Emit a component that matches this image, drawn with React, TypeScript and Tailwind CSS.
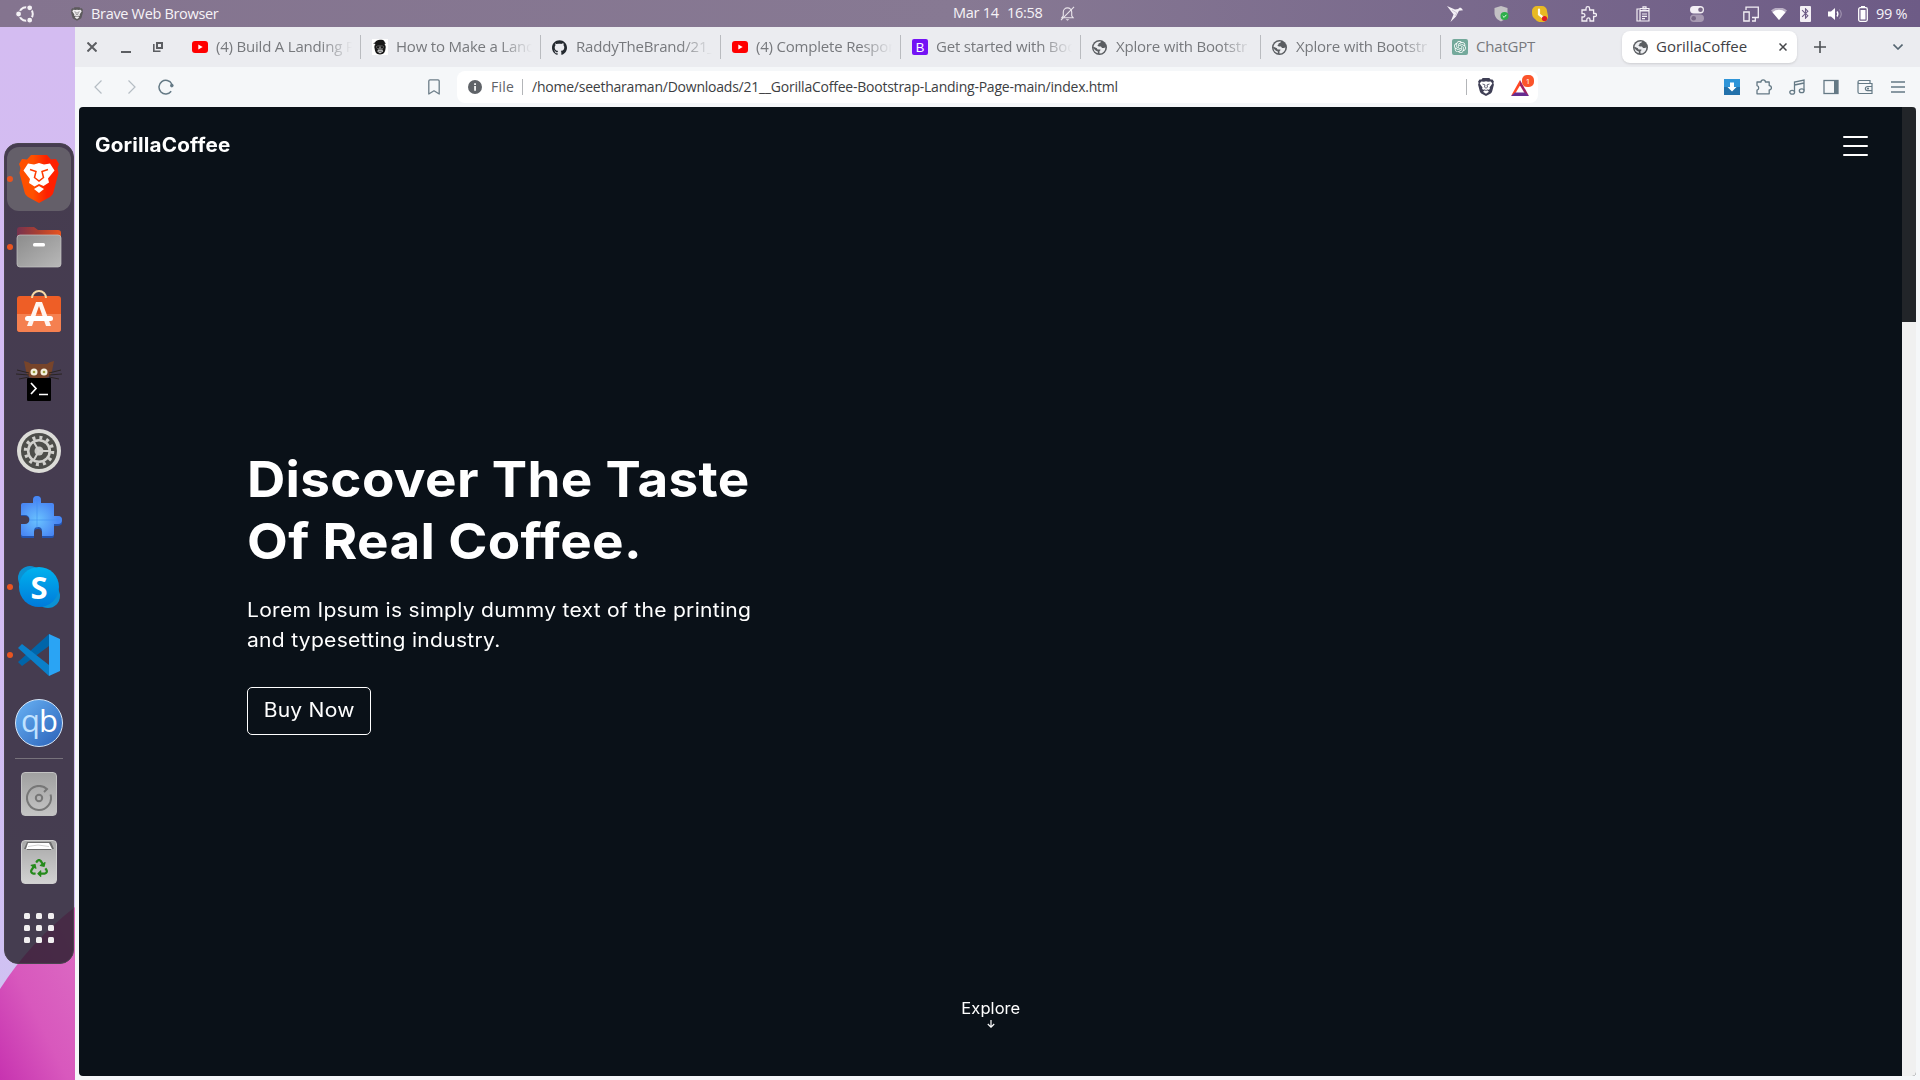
import React from "react";
import { SiGithub, SiOpenai } from "react-icons/si";
import { MdBluetooth } from "react-icons/md";
import { FaRecycle } from "react-icons/fa";

type Kids = { children?: React.ReactNode };

function BraveShield({ className, fill, face }: { className: string; fill: string; face: string }) {
  return (
    <svg viewBox="0 0 16 18" className={className}>
      <path d="M4.7 0h6.6l1.3 1.5 1.9-.1 1.4 2.2-.5 1.3.5 1.9-1.7 6.4c-.2.9-.8 1.7-1.5 2.2L8 18l-4.7-2.6c-.7-.5-1.3-1.3-1.5-2.2L.1 6.8l.5-1.9-.5-1.3 1.4-2.2 1.9.1z" fill={fill} />
      <path d="M3.2 3.4 6 3.8 8 3.3l2 .5 2.8-.4 1.5 2-2.8 4.1.4 1.4-2.600 1.600L11 13.700 8 15.800 5 13.700l1.700-1.200-2.600-1.600.4-1.400-2.800-4.100z" fill={face} />
      <path d="M4.500 6 7 6.900l-.5 2.300L8 10.200l1.500-1L9 6.900l2.500-.9M5.800 11.600 8 12.500l2.200-.9" fill="none" stroke={fill} strokeWidth=".8" />
    </svg>
  );
}

function Ubuntu() {
  return (
    <svg viewBox="0 0 20 20" className="size-5" fill="none">
      <circle cx="11" cy="10" r="6.800" stroke="#f4f1f5" strokeWidth="2" />
      <g fill="#f4f1f5" stroke="#84748f" strokeWidth="1.200">
        <circle cx="3.600" cy="10" r="3" />
        <circle cx="14.700" cy="3.800" r="3" />
        <circle cx="14.700" cy="16.200" r="3" />
      </g>
    </svg>
  );
}

const Slot = ({ w, children }: Kids & { w: string }) => <div className={`${w} flex shrink-0 items-center`}>{children}</div>;

function TopBar() {
  return (
    <header className="flex h-[27px] shrink-0 items-center justify-between bg-linear-to-r from-[#84748f] via-[#877993] via-50% to-[#6d5b86] font-['Open_Sans',sans-serif] text-[14.5px] text-[#f6f3f7]">
      <div className="flex w-[953px] items-center pl-[15px]">
        <Ubuntu />
        <BraveShield className="ml-9 h-4 w-3" fill="#5c5a5c" face="#f2f0f2" />
        <span className="ml-2 whitespace-nowrap tracking-[-0.32px]">Brave Web Browser</span>
      </div>
      <div className="flex flex-1 items-center whitespace-nowrap tracking-[-0.25px]">
        <span className="-mt-px">Mar 14</span>
        <span className="-mt-px ml-2">16:58</span>
        <svg viewBox="0 0 16 16" className="ml-[17px] size-[15px]" fill="none" stroke="#e8e3ea" strokeWidth="1.200">
          <path d="M2 12.500h12l-1.500-2V6.500a4.500 4.500 0 0 0-9 0v4zM1 15 15 1" />
          <path d="M6 14h4l-2 1.800z" fill="#e8e3ea" stroke="none" />
        </svg>
      </div>
      <div className="flex w-[473px] shrink-0 items-center">
        <Slot w="w-[47px]">
          <svg viewBox="0 0 16 16" className="size-4"><path d="M0 0 8 3.500l3-.5 2-1.500 1.500.8 1.500 2-4 .5-3 5.700L3.500 16l3-7.500z" fill="#f3eff5" /><path d="m5 4 5 3-2 3" stroke="#b9adc3" strokeWidth=".6" fill="none" /></svg>
        </Slot>
        <Slot w="w-[38px]">
          <svg viewBox="0 0 16 16" className="size-4"><path d="m7 0 6.500 2v5c0 4-3 7-6.500 8.500C3.500 14 .5 11 .5 7V2z" fill="#c3c1c4" /><circle cx="10.500" cy="10" r="4" fill="#2fae4a" /><path d="m8.700 10 1.400 1.400 2.300-2.600" stroke="#e3ffe8" fill="none" /></svg>
        </Slot>
        <Slot w="w-[49px]">
          <svg viewBox="0 0 16 16" className="size-4"><path d="M5 0h5a5 5 0 0 1 5 5l1 5a5.500 5.500 0 0 1-6 6 7 7 0 0 1-7-3C0 11 0 8 0 5a5 5 0 0 1 5-5" fill="#e8b923" /><path d="M7 3.500v5l4 3" stroke="#fffbe7" strokeWidth="2.200" fill="none" strokeLinecap="round" /><circle cx="12.500" cy="12.500" r="2.600" fill="#e01b24" /></svg>
        </Slot>
        <Slot w="w-[55px]">
          <svg viewBox="0 0 16 16" className="size-4" fill="none" stroke="#f3eff5" strokeWidth="1.300"><path d="M1 4h4V2.500a1.800 1.800 0 0 1 3.600 0V4h4v3.500H14a1.500 1.500 0 0 1 0 3h-1.400V15H9v-1.500a1.600 1.600 0 0 0-3.200 0V15H1v-4h1.300a1.600 1.600 0 0 0 0-3.300H1z" /></svg>
        </Slot>
        <Slot w="w-[54px]">
          <svg viewBox="0 0 14 16" className="h-4 w-3.5" fill="none" stroke="#f3eff5" strokeWidth="1.200"><path d="M3 3H1v12h8M4 4.500h9V15H4zM4 2.500h9V5H4zM7 .8h3v2H7zM6 8h5M6 10.300h5M6 12.600h3" /></svg>
        </Slot>
        <Slot w="w-[53px]">
          <svg viewBox="0 0 14 16" className="h-4 w-3.5"><rect y="0" width="14" height="7.500" rx="3.700" fill="#f3eff5" /><circle cx="10.500" cy="3.700" r="2.300" fill="#776786" /><rect y="8.500" width="14" height="7.500" rx="3.700" fill="#a79ab2" /><circle cx="3.700" cy="12.300" r="2.300" fill="#776786" /></svg>
        </Slot>
        <Slot w="w-7">
          <svg viewBox="0 0 16 16" className="size-4" fill="none" stroke="#f3eff5" strokeWidth="1.300"><path d="M3 4V1.200h12.300v10.300H9M12.300 11.500V15H9M.8 6h5.400v9H.8z" /></svg>
        </Slot>
        <Slot w="w-[29px]">
          <svg viewBox="0 0 16 12" className="h-3 w-4"><path d="M0 2.500A12 12 0 0 1 16 2.500L8 12z" fill="#b9aec4" /><path d="M1.500 4.200a10 10 0 0 1 13 0L8 12z" fill="#fff" /></svg>
        </Slot>
        <Slot w="w-[28px]">
          <div className="flex h-4 w-[11px] items-center justify-center rounded-[1px] bg-[#f3eff5] text-[#6d5b86]"><MdBluetooth size={13} className="shrink-0" /></div>
        </Slot>
        <Slot w="w-[30px]">
          <svg viewBox="0 0 15 14" className="h-3.5 w-[15px]" fill="none" stroke="#cfc6d7"><path d="M0 4.500h3L7 1v12L3 9.500H0z" fill="#fff" stroke="none" /><path d="M9 4.500q1.800 2.500 0 5" stroke="#fff" strokeWidth="1.300" /><path d="M11.500 2.500q3.500 4.500 0 9" strokeOpacity=".6" /></svg>
        </Slot>
        <Slot w="w-[18px]">
          <svg viewBox="0 0 10 16" className="h-4 w-2.5"><path d="M3 0h4v2H3z" fill="#fff" /><rect x=".7" y="1.700" width="8.600" height="13.600" rx="1.500" fill="none" stroke="#fff" strokeWidth="1.300" /><path d="M2.500 4h5v9.500h-5z" fill="#fff" /></svg>
        </Slot>
        <span className="whitespace-nowrap tracking-[-0.3px]">99 %</span>
      </div>
    </header>
  );
}

const YouTube = () => (
  <svg viewBox="0 0 16 12" className="h-3 w-4"><rect width="16" height="12" rx="3" fill="#f00" /><path d="M6.300 3.500v5l4.400-2.500z" fill="#fff" /></svg>
);
const Gorilla = () => (
  <svg viewBox="0 0 16 16" className="size-4"><rect width="16" height="16" fill="#fff" /><path d="M3 3.500C4 1 7 .3 9.500.8c2.500.3 3 1.200 3.300 2.700l1.200.8-1.500.7c1.200 1.500 1.500 3 1 4.500-.2 3-1.500 6-5.500 6S3 12.500 2.600 9.500C2 8 2.500 6 3.500 5L1 4.300z" fill="#181818" /><path d="M4 7.300c2-.6 6-.6 8 0L11 9.500H5zM6 10.500h4.500l.6 2L8 14.500l-2.700-2z" fill="#c9c9c9" /><path d="M4.600 7.300h3L7 9H5zM8.500 7.300h3L11 9H9zM6.500 12.300h3.300" fill="#111" stroke="#222" strokeWidth=".6" /></svg>
);
const Bootstrap = () => (
  <div className="flex size-4 items-center justify-center rounded-[2px] bg-[#7413f5] font-['Liberation_Sans',sans-serif] text-[13px] leading-none text-white">B</div>
);
const Globe = () => (
  <svg viewBox="0 0 15 15" className="size-[15px]">
    <circle cx="7.500" cy="7.500" r="7.500" fill="#5b5e62" />
    <path d="M9 1.600c-.3 1.300-1 1.600-2.200 1.700-.4.900-.3 1.500-1.300 1.900.4 1 1 1.300 2.500 1.300 1.300 0 1.800.6 1.900 1.600h2c.5 0 .8-.3 1.500-.8a6 6 0 0 1-5.900 6.200v-2.400c.8-.3 1-.8.9-1.600H6.500C5.400 9.500 5 9 5 8.200 4 7.700 2.600 7.300 1.600 6.700a6 6 0 0 0 4.200 6.500V11.500C4 11 2.500 10 1.500 8 1.200 4.500 4 1.300 7.500 1.400z" fill="#ecedf0" />
  </svg>
);
const ChatGpt = () => (
  <div className="flex size-4 items-center justify-center rounded-[2px] bg-[#74a99b] text-white"><SiOpenai size={12} /></div>
);

const tabs = [
  { icon: <YouTube />, title: "(4) Build A Landing P" },
  { icon: <Gorilla />, title: "How to Make a Land" },
  { icon: <SiGithub size={15} className="text-[#24292f]" />, title: "RaddyTheBrand/21_" },
  { icon: <YouTube />, title: "(4) Complete Respon" },
  { icon: <Bootstrap />, title: "Get started with Boo" },
  { icon: <Globe />, title: "Xplore with Bootstr" },
  { icon: <Globe />, title: "Xplore with Bootstr" },
];

function TabStrip() {
  return (
    <div className="flex h-10 shrink-0 items-center bg-[#ebecf0] text-[15px] tracking-[-0.2px] text-[#77797d]">
      <div className="flex h-full w-[106px] shrink-0 items-center pl-3">
        <svg viewBox="0 0 10 10" className="size-2.5" stroke="#5c5e62" strokeWidth="2"><path d="m.5.5 9 9m0-9-9 9" /></svg>
        <div className="ml-6 mt-[9px] h-0.5 w-2.5 bg-[#5c5e62]" />
        <svg viewBox="0 0 10 10" className="ml-[22px] size-2.5" fill="none" stroke="#5c5e62"><path d="M4 1h5v5H4z" strokeWidth="2" /><path d="M.8 2v7.200H7.500" strokeWidth="1.600" /></svg>
      </div>
      {tabs.map((t, i) => (
        <div key={i} className="flex h-6 w-[180px] shrink-0 items-center border-r border-[#b9bbbf] pl-[11px]">
          <div className="flex w-[24px] shrink-0 items-center">{t.icon}</div>
          <div className="-mt-0.5 w-[139px] overflow-hidden whitespace-nowrap mask-r-from-75% mask-r-to-98%">{t.title}</div>
        </div>
      ))}
      <div className="flex w-[181px] shrink-0 items-center pl-[11px]">
        <div className="w-[24px] shrink-0"><ChatGpt /></div><span className="-mt-0.5">ChatGPT</span>
      </div>
      <div className="flex h-8 w-[175px] shrink-0 items-center rounded-lg bg-white pl-[11px] text-[#3f4145] shadow-sm">
        <div className="w-[23px] shrink-0"><Globe /></div>
        <span className="-mt-0.5 w-[123px] tracking-normal">GorillaCoffee</span>
        <svg viewBox="0 0 8 8" className="size-2" stroke="#45474a" strokeWidth="1.500"><path d="m.5.500 7 7m0-7-7 7" /></svg>
      </div>
      <svg viewBox="0 0 12 12" className="ml-[17px] size-3" stroke="#4d5054" strokeWidth="1.600"><path d="M6 0v12M0 6h12" /></svg>
      <svg viewBox="0 0 10 6" className="ml-[67px] h-1.5 w-2.5" fill="none" stroke="#556571" strokeWidth="1.600"><path d="m.5.500 4.500 4.500L9.500.500" /></svg>
    </div>
  );
}

function Toolbar() {
  return (
    <div className="flex h-10 shrink-0 items-center bg-[#f5f7f9]">
      <div className="flex w-[382px] shrink-0 items-center pl-[19px]">
        <svg viewBox="0 0 8 14" className="h-3.5 w-2" fill="none" stroke="#b5bdc4" strokeWidth="1.200"><path d="M7.500.500 1 7l6.500 6.500" /></svg>
        <svg viewBox="0 0 8 14" className="ml-[26px] h-3.5 w-2" fill="none" stroke="#b5bdc4" strokeWidth="1.200"><path d="M.500.500 7 7 .500 13.500" /></svg>
        <svg viewBox="0 0 16 16" className="ml-[22px] size-4" fill="none" stroke="#647985" strokeWidth="1.500"><path d="M13.200 12.300A6.800 6.800 0 1 1 13.800 5" /><circle cx="13.800" cy="6.600" r="1.800" fill="#647985" stroke="none" /></svg>
        <svg viewBox="0 0 12 16" className="ml-[254px] h-4 w-3" fill="none" stroke="#6c7d88" strokeWidth="1.300"><path d="M.800 2A1.300 1.300 0 0 1 2 .800h8A1.300 1.300 0 0 1 11.200 2v13L6 11.800.800 15z" strokeLinejoin="round" /></svg>
      </div>
      <div className="flex h-8 w-[1081px] shrink-0 items-center rounded-lg bg-white pl-[11px] text-sm text-[#3c3e42]">
        <svg viewBox="0 0 14 14" className="size-3.5"><circle cx="7" cy="7" r="7" fill="#5f6368" /><path d="M6.200 6h1.700v4.800H6.200zM6.200 3.300h1.700v1.600H6.200z" fill="#fff" /></svg>
        <span className="ml-[9px] w-[31px] tracking-[0.2px] text-[#5f6368]">File</span>
        <div className="h-4 w-px bg-[#b3b5b8]" />
        <span className="ml-[9px] w-[934px] whitespace-nowrap tracking-[-0.23px]">/home/seetharaman/Downloads/21__GorillaCoffee-Bootstrap-Landing-Page-main/index.html</span>
        <div className="h-4 w-px bg-[#b3b5b8]" />
        <BraveShield className="ml-[11px] h-[18px] w-4" fill="#3f3f55" face="#fff" />
        <div className="relative ml-[17px] size-[18px]">
          <svg viewBox="0 0 18 16" className="mt-0.5 h-4 w-[18px]"><path d="M9 0 0 16l4.500-3L9 5.500z" fill="#ff4724" /><path d="m9 0 9 16-4.500-3L9 5.500z" fill="#9e1f63" /><path d="m0 16 4-3.500h10l4 3.500z" fill="#662d91" /></svg>
          <div className="absolute left-[11px] -top-[3px] flex size-3 items-center justify-center rounded-[5px] bg-[#fb542b] text-[8px] leading-none text-white">1</div>
        </div>
      </div>
      <div className="flex flex-1 items-center pl-[186px]">
        <svg viewBox="0 0 16 16" className="size-4"><path d="M0 0h16v16H0z" fill="#2271ab" /><path d="M0 0h16v8H0z" fill="#2f95d8" /><path d="M6 3.500h4V8h2.500L8 12.500 3.500 8H6z" fill="#fff" /></svg>
        <svg viewBox="0 0 16 16" className="ml-4 size-4" fill="none" stroke="#647985" strokeWidth="1.300"><path d="M1 3h4a2.200 2.200 0 0 1 4.400 0h3.800v3.600a2.200 2.200 0 0 1 0 4.400v3.800H1v-3.600a2.400 2.400 0 0 0 0-4.600z" strokeLinejoin="round" /></svg>
        <svg viewBox="0 0 16 16" className="ml-[17px] size-4" fill="none" stroke="#647985" strokeWidth="1.300"><path d="M5.500 13V3L15 1v10.500M5.500 6 15 4" /><ellipse cx="3.200" cy="13.300" rx="2.400" ry="1.900" /><ellipse cx="12.700" cy="11.700" rx="2.400" ry="1.900" /></svg>
        <svg viewBox="0 0 16 16" className="ml-[18px] size-4"><rect x="1" y="1.500" width="14" height="13" fill="none" stroke="#647985" strokeWidth="1.300" /><path d="M11 1.500h4v13h-4z" fill="#647985" /></svg>
        <svg viewBox="0 0 16 16" className="ml-[18px] size-4" fill="none" stroke="#647985" strokeWidth="1.200"><path d="M13 4V1.500H2.500a1.500 1.500 0 0 0 0 3H15V14.500H2.500A1.500 1.500 0 0 1 1 13V3M15 7.500h-4.500a2 2 0 0 0 0 4.200H15" /><circle cx="11" cy="9.600" r=".5" /></svg>
        <svg viewBox="0 0 14 12" className="ml-[18px] h-3 w-3.5" stroke="#647985" strokeWidth="1.300"><path d="M0 1h14M0 6h14M0 11h14" /></svg>
      </div>
    </div>
  );
}

function Page() {
  return (
    <div className="flex min-h-0 flex-1 bg-[#f5f7f9] pr-1 pb-1 pl-1">
      <div className="flex flex-1 overflow-hidden rounded-[4px] bg-[#0a1118] font-['Inter',sans-serif] text-white">
        <main className="flex flex-1 flex-col">
          <nav className="flex h-20 items-center justify-between pr-[34px] pl-4">
            <span className="-mt-0.5 origin-left scale-x-[1.06] text-[19.5px] font-bold tracking-[0.16px]">GorillaCoffee</span>
            <svg viewBox="0 0 25 22" className="h-[22px] w-[25px]" stroke="#fff" strokeWidth="2" strokeLinecap="round"><path d="M1 1h23M1 10h23M1 19h23" /></svg>
          </nav>
          <section className="mt-[261px] pl-[168px]">
            <h1 className="w-fit origin-left scale-x-[1.06] text-[50px] leading-[62.4px] font-bold tracking-[0.33px]">Discover The Taste<br />Of Real Coffee.</h1>
            <p className="mt-[22px] w-fit origin-left scale-x-[1.08] text-[19.5px] leading-[30px] tracking-[0.26px]">Lorem Ipsum is simply dummy text of the printing<br />and typesetting industry.</p>
            <button className="mt-8 flex h-12 w-[124px] items-center justify-center rounded-[5px] border border-white"><span className="scale-x-[1.08] text-[19.5px] tracking-[0.22px]">Buy Now</span></button>
          </section>
          <div className="mt-[262px] flex flex-col items-center">
            <span className="scale-x-[1.06] text-[15.6px] leading-6 tracking-[0.05px]">Explore</span>
            <svg viewBox="0 0 8 8" className="-mt-px size-2" fill="none" stroke="#fff" strokeWidth="1.200"><path d="M4 0v7M.800 4 4 7.200 7.200 4" /></svg>
          </div>
        </main>
        <div className="w-3.5 bg-[#f0f0f0]"><div className="h-[215px] bg-[#222529]" /></div>
      </div>
    </div>
  );
}

const DockTile = ({ running, active, children }: Kids & { running?: boolean; active?: boolean }) => (
  <div className={`relative flex size-16 shrink-0 items-center justify-center ${active ? "rounded-[12px] bg-[#645f69]" : ""}`}>
    {running && <span className="absolute top-[29px] left-0 size-1.5 rounded-full bg-[#e95420]" />}
    {children}
  </div>
);

function Dock() {
  return (
    <div className="flex h-[821px] w-[70px] flex-col items-center gap-1 rounded-[14px] border border-[#4a444f] bg-[#221c27]/80 pt-[3px]">
      <DockTile running active>
        <svg viewBox="0 0 40 48" className="h-12 w-10">
          <defs><linearGradient id="bl"><stop offset=".35" stopColor="#ff5000" /><stop offset=".7" stopColor="#ff2000" /></linearGradient></defs>
          <path d="M12 0h16l4 4.500 5-.5 3 5-1.500 4 1 5-5 19c-.5 2-1.500 3.500-3.500 5L20 48 9 42c-2-1.500-3-3-3.500-5L.5 18l1-5L0 9l3-5 5 .5z" fill="url(#bl)" />
          <path d="M9 8.500 15 9.500 20 8l5 1.500 6-1 4.500 7-6.500 8 1 4-5.500 3.500L20 29l-4.500 2.500L10 28l1-4L4.500 15.500zM20 31l5 3-5 4-5-4z" fill="#fff" />
          <path d="m11 14.500 6 2-1.500 6 4.500 3.500 4.500-3.500-1.500-6 6-2" fill="none" stroke="#ff3a00" strokeWidth="1.500" />
        </svg>
      </DockTile>
      <DockTile running>
        <svg viewBox="0 0 46 42" className="h-[42px] w-[46px]">
          <defs><linearGradient id="ft"><stop stopColor="#77324f" /><stop offset=".5" stopColor="#ad4030" /><stop offset="1" stopColor="#e95420" /></linearGradient><linearGradient id="fb" x2="1" y2="1"><stop stopColor="#8c8c8c" /><stop offset="1" stopColor="#b8b8b8" /></linearGradient></defs>
          <path d="M1 4a3 3 0 0 1 3-3h14l4 3h20a3 3 0 0 1 3 3v12H1z" fill="url(#ft)" /><rect x="1" y="9" width="44" height="32" rx="3" fill="url(#fb)" stroke="#c6c6c6" strokeWidth=".7" /><rect x="17" y="17" width="12" height="3.500" rx="1.500" fill="#fff" />
        </svg>
      </DockTile>
      <DockTile>
        <svg viewBox="0 0 46 44" className="mb-2 h-11 w-[46px]">
          <rect x="1" y="7" width="44" height="36" rx="3" fill="#ee5e26" /><path d="M1 25h44v15a3 3 0 0 1-3 3H4a3 3 0 0 1-3-3z" fill="#f58050" /><path d="M16 9a7 7 0 0 1 14 0" fill="none" stroke="#f8d9a5" strokeWidth="2" /><path d="m11 37 9-24h6l9 24h-5L23 17l-7 20z" fill="#fff4ef" /><rect x="9" y="27" width="28" height="5" rx="2.500" fill="#fff" />
        </svg>
      </DockTile>
      <DockTile>
        <svg viewBox="0 0 46 42" className="mb-1 h-[42px] w-[46px]">
          <path d="M8 1q5 1 7 3h16q2-2 7-3l-2 10q-1 6-7 7H17q-6-1-7-7z" fill="#77442a" /><path d="M13 13 1 10m12 5L0 14m13 3L3 19M33 13l12-3m-12 5 13-1m-13 3 10 2" stroke="#2b2422" strokeWidth="1" /><circle cx="18" cy="12" r="3.500" fill="#f4f0dc" /><circle cx="28" cy="12" r="3.500" fill="#f4f0dc" /><circle cx="18" cy="12" r="1.300" fill="#9a9b3e" /><circle cx="28" cy="12" r="1.300" fill="#9a9b3e" /><rect x="11" y="18" width="24" height="23" rx="1" fill="#000" /><path d="m15 23 5 5.500-5 5.500M23 34.500h9" fill="none" stroke="#fff" strokeWidth="1.700" />
        </svg>
      </DockTile>
      <DockTile>
        <svg viewBox="0 0 46 46" className="size-[46px]" fill="none">
          <circle cx="23" cy="23" r="22" fill="#dcdcd8" /><circle cx="23" cy="23" r="18" fill="#4d4e4a" /><circle cx="23" cy="23" r="13.500" stroke="#d0d0cc" strokeWidth="3.500" strokeDasharray="3 4.070" /><circle cx="23" cy="23" r="10.800" stroke="#d0d0cc" strokeWidth="2.600" /><circle cx="23" cy="23" r="4.500" fill="#c8c8c4" /><path d="M23 23h11M23 23l-5.500-9.500M23 23l-5.500 9.500" stroke="#d0d0cc" strokeWidth="2" />
        </svg>
      </DockTile>
      <DockTile>
        <svg viewBox="0 0 42 44" className="mb-1 ml-1 h-11 w-[42px]">
          <defs><radialGradient id="pz" cx=".4" cy=".6"><stop stopColor="#6ac3ff" /><stop offset="1" stopColor="#4a88f4" /></radialGradient></defs>
          <path d="M3 9h10V5a4 4 0 0 1 8 0v4h11a2 2 0 0 1 2 2v10h4a4 4 0 0 1 0 10h-4v10a2 2 0 0 1-2 2H22v-5a4 4 0 0 0-8 0v5H3a2 2 0 0 1-2-2V30h4a4.500 4.500 0 0 0 0-9H1V11a2 2 0 0 1 2-2" fill="#2453ad" /><path d="M3 8h10V5a4 4 0 0 1 8 0v3h11a2 2 0 0 1 2 2v11h4a4 4 0 0 1 0 8h-4v10a2 2 0 0 1-2 2H22v-5a4 4 0 0 0-8 0v5H3a2 2 0 0 1-2-2V29h4a4.500 4.500 0 0 0 0-9H1V10a2 2 0 0 1 2-2" fill="url(#pz)" /><path d="M17 1.500v32M9 25h32" stroke="#3d8ff0" strokeWidth=".6" />
        </svg>
      </DockTile>
      <DockTile running>
        <div className="relative flex size-[42px] items-center justify-center">
          <span className="absolute top-0 left-0 size-6 rounded-full bg-[#0b91d2]" /><span className="absolute right-0 bottom-0 size-6 rounded-full bg-[#0b91d2]" />
          <span className="relative flex size-10 items-center justify-center rounded-full bg-linear-to-b from-[#00b2ee] to-[#007ada] font-['Noto_Sans',sans-serif] text-[31px] leading-none font-bold text-white">S</span>
        </div>
      </DockTile>
      <DockTile running>
        <svg viewBox="0 0 42 42" className="size-[42px]">
          <path d="m0 28 4 4L31 12V0z" fill="#0065a9" /><path d="m0 14 4-4 27 21v11z" fill="#0a80ca" /><path d="m31 0 11 5v32l-11 5z" fill="#2aa4f4" />
        </svg>
      </DockTile>
      <DockTile>
        <div className="flex size-12 items-center justify-center rounded-full border border-[#d4e6fa] bg-linear-to-br from-[#6ab3f5] to-[#2b61b8] pb-1.5 font-['Open_Sans',sans-serif] text-[31px] leading-none tracking-[-1px] text-white"><span className="text-[#c0e2ff]">q</span>b</div>
      </DockTile>
      <div className="-my-px h-px w-12 shrink-0 bg-[#77727b]" />
      <DockTile>
        <div className="flex h-11 w-9 items-center justify-center rounded-[4px] border border-[#c2c2c2] bg-linear-to-b from-[#a0a0a0] to-[#c4c4c4] pt-2">
          <svg viewBox="0 0 26 26" className="size-[26px]" fill="none" stroke="#777" strokeWidth="2"><path d="M24.500 9.500A12 12 0 1 1 21 4l-3 3" /><circle cx="13" cy="13" r="3.200" /></svg>
        </div>
      </DockTile>
      <DockTile>
        <div className="flex h-11 w-9 flex-col items-center rounded-[4px] border border-[#cfcfcf] bg-linear-to-b from-[#a9a9a9] to-[#d2d2d2] pt-px">
          <svg viewBox="0 0 30 8" className="h-2 w-[30px] shrink-0"><path d="M3 0h24l3 7h-3v1H3V7H0z" fill="#6d6d6d" /><path d="M4 1h21l3 6H2z" fill="#fff" /><path d="M4 4.500 14 3l11 1.500" stroke="#bbb" strokeWidth=".7" fill="none" /></svg>
          <FaRecycle size={18} className="mt-[9px] text-[#258a1b]" />
        </div>
      </DockTile>
      <div className="mt-[15px] grid grid-cols-3 gap-1.5">
        {Array.from({ length: 9 }, (_, i) => <span key={i} className="size-1.5 rounded-[1.500px] bg-[#f1eff0]" />)}
      </div>
    </div>
  );
}

function Wallpaper() {
  return (
    <svg viewBox="0 0 75 1053" className="absolute inset-0 h-full w-full">
      <defs>
        <linearGradient id="w1" x2="0" y2="1"><stop stopColor="#d4bcf1" /><stop offset=".5" stopColor="#d3bcf3" /><stop offset="1" stopColor="#cfc3f2" /></linearGradient>
        <linearGradient id="w2" x1=".8" y1=".1" x2="0" y2="1"><stop stopColor="#db68c2" /><stop offset=".5" stopColor="#d858bd" /><stop offset="1" stopColor="#c733b0" /></linearGradient>
      </defs>
      <path d="M0 0h75v1053H0z" fill="url(#w1)" />
      <path d="M75 880Q30 915 0 962v91h75z" fill="url(#w2)" />
    </svg>
  );
}

export default function App() {
  return (
    <div className="flex h-[1080px] w-[1920px] flex-col overflow-hidden">
      <TopBar />
      <div className="flex min-h-0 flex-1">
        <aside className="relative w-[75px] shrink-0">
          <Wallpaper />
          <div className="relative pt-[116px] pl-1"><Dock /></div>
        </aside>
        <div className="flex min-w-0 flex-1 flex-col font-['Open_Sans',sans-serif]">
          <TabStrip />
          <Toolbar />
          <Page />
        </div>
      </div>
    </div>
  );
}
